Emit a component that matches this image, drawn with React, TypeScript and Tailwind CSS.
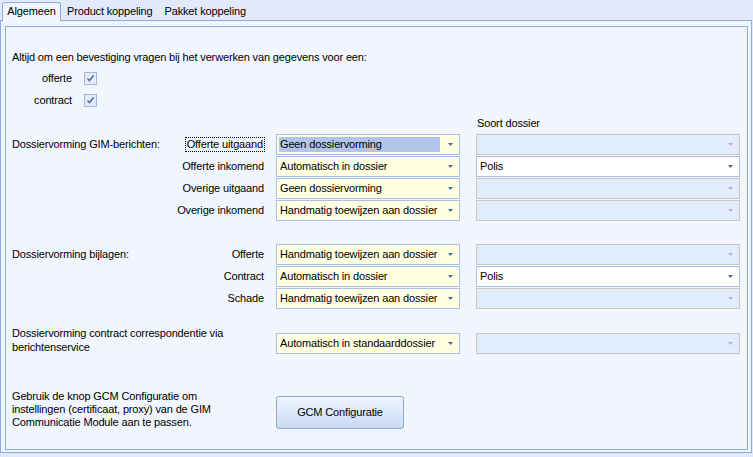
import React from "react";

type ComboKind = "yellow" | "white" | "disabled";

function Arrow({ disabled }: { disabled?: boolean }) {
  return (
    <svg width="5" height="3" viewBox="0 0 5 3" className="shrink-0 mr-[1px]">
      <path d="M0 0h5L2.5 3z" fill={disabled ? "#c9a9c6" : "#4a6599"} />
    </svg>
  );
}

function Combo({
  kind,
  value,
  width,
  selected,
}: {
  kind: ComboKind;
  value?: string;
  width: string;
  selected?: boolean;
}) {
  const box =
    kind === "yellow"
      ? "bg-[#ffffe1] border-[#a9c1e6]"
      : kind === "white"
        ? "bg-white border-[#a9c1e6]"
        : "bg-[#e1edfc] border-[#cbc8b9]";
  return (
    <div className={`${width} h-[21px] border ${box} flex items-center pl-[2px] pr-[5px]`}>
      <div className="flex-1 min-w-0 flex items-center">
        {value && (
          <span
            className={`h-[15px] leading-[15px] pl-[1px] whitespace-nowrap ${selected ? "bg-[#b1c5ea] w-[161px]" : ""}`}
          >
            {value}
          </span>
        )}
      </div>
      <Arrow disabled={kind === "disabled"} />
    </div>
  );
}

function Check() {
  return (
    <div className="w-[13px] h-[13px] border border-[#a7b9d6] bg-[#e4ebf4] flex items-center justify-center">
      <svg width="9" height="9" viewBox="0 0 9 9">
        <path d="M1.5 4.5l2 2.2 4-5.2" stroke="#4a68a4" strokeWidth="1.5" fill="none" />
      </svg>
    </div>
  );
}

function Row({
  group,
  label,
  left,
  right,
  rightValue,
  focus,
  selected,
}: {
  group?: string;
  label: string;
  left: string;
  right: ComboKind;
  rightValue?: string;
  focus?: boolean;
  selected?: boolean;
}) {
  return (
    <div className="flex h-[22px] items-start">
      <div className="w-[170px] h-[21px] flex items-center whitespace-nowrap">{group}</div>
      <div className="w-[82px] h-[21px] flex items-center justify-end whitespace-nowrap">
        <span className={focus ? "outline outline-1 outline-dotted outline-black px-[1px]" : ""}>{label}</span>
      </div>
      <div className="ml-[12px]">
        <Combo kind="yellow" value={left} width="w-[184px]" selected={selected} />
      </div>
      <div className="ml-[16px]">
        <Combo kind={right} value={rightValue} width="w-[264px]" />
      </div>
    </div>
  );
}

export default function App() {
  return (
    <div className="w-[753px] h-[457px] bg-[#e0eafb] text-[11px] leading-[13px] tracking-[-0.15px] text-black font-['Liberation_Sans',Arial,sans-serif] overflow-hidden">
      <div className="h-[20px] flex items-end pl-[2px] relative z-10">
        <div className="h-[19px] w-[59px] border border-b-0 border-[#8eaddc] rounded-t-[3px] bg-[#f1f6fe] flex items-center justify-center -mb-[1px] pb-[1px]">
          Algemeen
        </div>
        <div className="h-[19px] flex items-center ml-[6px] pt-[2px] gap-[12px]">
          <span>Product koppeling</span>
          <span>Pakket koppeling</span>
        </div>
      </div>
      <div className="w-[752px] h-[433px] border border-[#8eaddc] bg-[#f1f6fe] pt-[5px] pl-[4px] pr-[3px] pb-[2px]">
        <div className="h-full border border-[#8eaddc] pl-[6px]">
          <div className="mt-[24px]">Altijd om een bevestiging vragen bij het verwerken van gegevens voor een:</div>
          <div className="mt-[3px] flex flex-col">
            <div className="flex items-center h-[22px]">
              <div className="w-[60px] text-right">offerte</div>
              <div className="ml-[12px]">
                <Check />
              </div>
            </div>
            <div className="flex items-center h-[22px]">
              <div className="w-[60px] text-right">contract</div>
              <div className="ml-[12px]">
                <Check />
              </div>
            </div>
          </div>
          <div className="mt-[6px] ml-[465px] h-[13px]">Soort dossier</div>
          <div className="mt-[4px]">
            <Row
              group="Dossiervorming GIM-berichten:"
              label="Offerte uitgaand"
              left="Geen dossiervorming"
              right="disabled"
              focus
              selected
            />
            <Row label="Offerte inkomend" left="Automatisch in dossier" right="white" rightValue="Polis" />
            <Row label="Overige uitgaand" left="Geen dossiervorming" right="disabled" />
            <Row label="Overige inkomend" left="Handmatig toewijzen aan dossier" right="disabled" />
          </div>
          <div className="mt-[22px]">
            <Row
              group="Dossiervorming bijlagen:"
              label="Offerte"
              left="Handmatig toewijzen aan dossier"
              right="disabled"
            />
            <Row label="Contract" left="Automatisch in dossier" right="white" rightValue="Polis" />
            <Row label="Schade" left="Handmatig toewijzen aan dossier" right="disabled" />
          </div>
          <div className="mt-[16px] flex items-start">
            <div className="w-[264px] leading-[14px]">
              Dossiervorming contract correspondentie via
              <br />
              berichtenservice
            </div>
            <div className="mt-[7px]">
              <Combo kind="yellow" value="Automatisch in standaarddossier" width="w-[184px]" />
            </div>
            <div className="ml-[16px] mt-[7px]">
              <Combo kind="disabled" width="w-[264px]" />
            </div>
          </div>
          <div className="mt-[36px] flex items-start">
            <div className="w-[264px]">
              Gebruik de knop GCM Configuratie om
              <br />
              instellingen (certificaat, proxy) van de GIM
              <br />
              Communicatie Module aan te passen.
            </div>
            <button className="mt-[6px] w-[128px] h-[33px] rounded-[3px] border border-[#8fa7c9] bg-gradient-to-b from-[#f0f5fd] to-[#c8daf4]">
              GCM Configuratie
            </button>
          </div>
        </div>
      </div>
    </div>
  );
}
